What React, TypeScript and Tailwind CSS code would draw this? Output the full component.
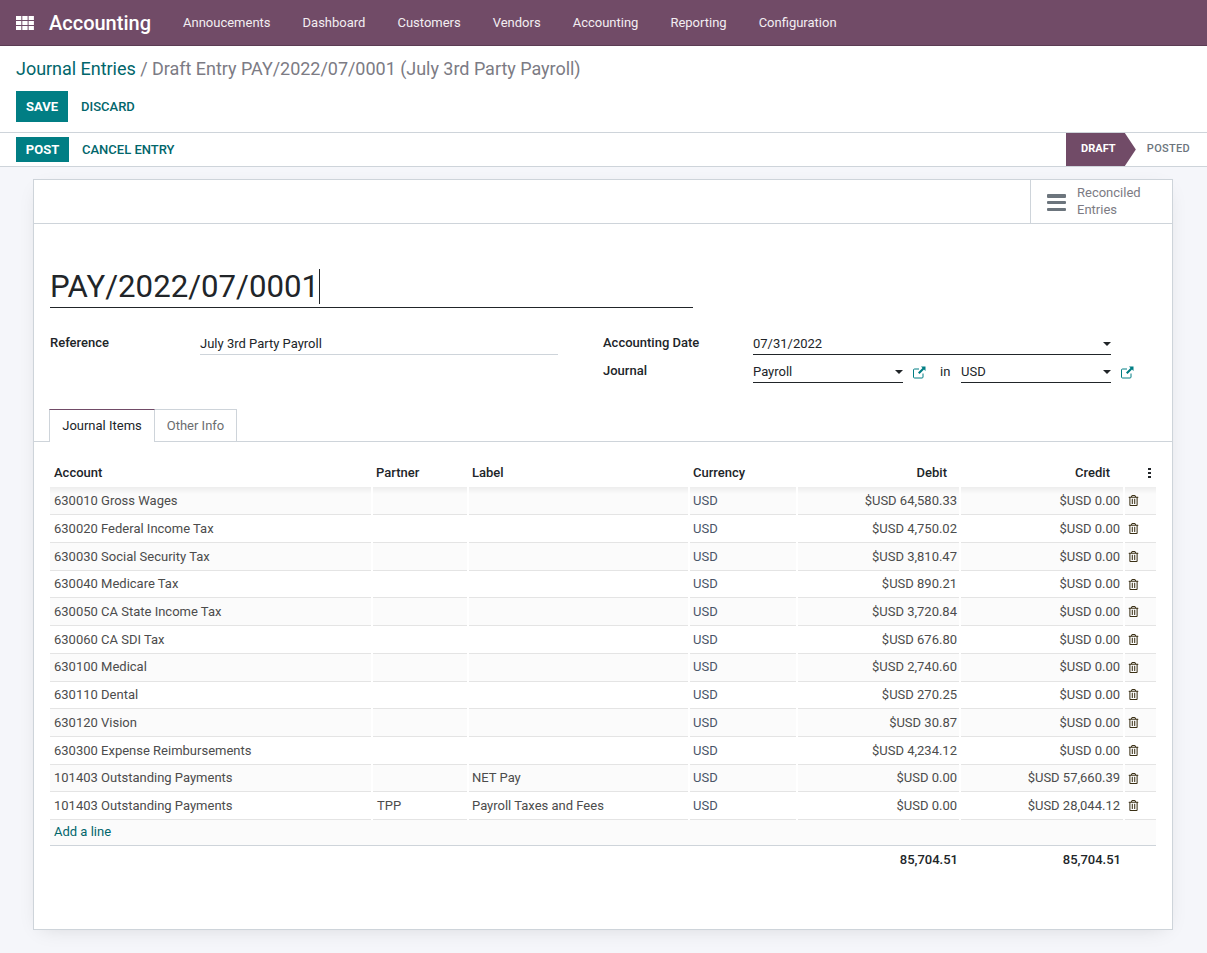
import { FaRegTrashAlt } from 'react-icons/fa';

const menus = ['Annoucements', 'Dashboard', 'Customers', 'Vendors', 'Accounting', 'Reporting', 'Configuration'];

type Line = { account: string; partner?: string; label?: string; debit: string; credit: string };

const lines: Line[] = [
  { account: '630010 Gross Wages', debit: '$USD 64,580.33', credit: '$USD 0.00' },
  { account: '630020 Federal Income Tax', debit: '$USD 4,750.02', credit: '$USD 0.00' },
  { account: '630030 Social Security Tax', debit: '$USD 3,810.47', credit: '$USD 0.00' },
  { account: '630040 Medicare Tax', debit: '$USD 890.21', credit: '$USD 0.00' },
  { account: '630050 CA State Income Tax', debit: '$USD 3,720.84', credit: '$USD 0.00' },
  { account: '630060 CA SDI Tax', debit: '$USD 676.80', credit: '$USD 0.00' },
  { account: '630100 Medical', debit: '$USD 2,740.60', credit: '$USD 0.00' },
  { account: '630110 Dental', debit: '$USD 270.25', credit: '$USD 0.00' },
  { account: '630120 Vision', debit: '$USD 30.87', credit: '$USD 0.00' },
  { account: '630300 Expense Reimbursements', debit: '$USD 4,234.12', credit: '$USD 0.00' },
  { account: '101403 Outstanding Payments', label: 'NET Pay', debit: '$USD 0.00', credit: '$USD 57,660.39' },
  { account: '101403 Outstanding Payments', partner: 'TPP', label: 'Payroll Taxes and Fees', debit: '$USD 0.00', credit: '$USD 28,044.12' },
];

function Caret() {
  return <span className="mt-[1px] h-0 w-0 border-x-[4px] border-t-[4px] border-x-transparent border-t-[#212529]" />;
}

function ExternalLink() {
  return (
    <svg width="13" height="13" viewBox="0 0 13 13" fill="none" className="text-[#017e84]">
      <path d="M10 7.5v3.5a1 1 0 0 1-1 1H1.5a1 1 0 0 1-1-1V4a1 1 0 0 1 1-1H6" stroke="currentColor" strokeWidth="1" />
      <path d="M8 0.5H12.5V5L11 3.5 6.5 8 5 6.5 9.5 2Z" fill="currentColor" />
    </svg>
  );
}

function SelectField({ value, width }: { value: string; width: string }) {
  return (
    <div className={`flex h-[22px] items-center justify-between border-b border-[#212529] text-[#212529] ${width}`}>
      <span>{value}</span>
      <Caret />
    </div>
  );
}

export default function App() {
  return (
    <div className="flex h-[953px] w-[1207px] flex-col overflow-hidden bg-[#f5f6fa] text-[13px] text-[#4c4c4c] [font-family:Roboto,sans-serif]">
      <nav className="flex h-[46px] shrink-0 items-center border-b border-[#5b3c53] bg-[#714b67] text-white">
        <svg width="18" height="14" viewBox="0 0 18 14" fill="currentColor" className="ml-[16px]">
          <rect x="0" y="0" width="5.3" height="4" />
          <rect x="6.3" y="0" width="5.3" height="4" />
          <rect x="12.6" y="0" width="5.3" height="4" />
          <rect x="0" y="5" width="5.3" height="4" />
          <rect x="6.3" y="5" width="5.3" height="4" />
          <rect x="12.6" y="5" width="5.3" height="4" />
          <rect x="0" y="10" width="5.3" height="4" />
          <rect x="6.3" y="10" width="5.3" height="4" />
          <rect x="12.6" y="10" width="5.3" height="4" />
        </svg>
        <span className="ml-[15px] text-[20px] font-medium">Accounting</span>
        <div className="ml-[32px] flex gap-[32px] text-[13px] text-[#f3eef2]">
          {menus.map((menu) => (
            <span key={menu}>{menu}</span>
          ))}
        </div>
      </nav>

      <div className="h-[86px] shrink-0 bg-white px-[16px]">
        <div className="pt-[11px] text-[18px] leading-[24px] tracking-[-0.03px] text-[#7c7b84]">
          <span className="text-[#01666b]">Journal Entries</span> / Draft Entry PAY/2022/07/0001 (July 3rd Party Payroll)
        </div>
        <div className="mt-[10px] flex items-center">
          <button className="h-[31px] w-[52px] bg-[#017e84] text-[13px] font-bold text-white">SAVE</button>
          <button className="ml-[13px] text-[13px] font-medium text-[#01666b]">DISCARD</button>
        </div>
      </div>

      <div className="flex h-[35px] shrink-0 items-center justify-between border-y border-[#ced4da] bg-white pl-[16px]">
        <div className="flex items-center">
          <button className="h-[25px] w-[53px] bg-[#017e84] text-[13px] font-bold text-white">POST</button>
          <button className="ml-[13px] text-[13px] font-medium text-[#01666b]">CANCEL ENTRY</button>
        </div>
        <div className="flex h-full items-stretch text-[11px] font-medium">
          <span className="flex w-[59px] items-center justify-center bg-[#714b67] pl-[6px] font-bold text-white">DRAFT</span>
          <span className="h-full w-[11px] bg-[#714b67] [clip-path:polygon(0_0,100%_50%,0_100%)]" />
          <span className="flex items-center pl-[11px] pr-[17px] tracking-[0.3px] text-[#6c757d]">POSTED</span>
        </div>
      </div>

      <main className="ml-[33px] mr-[34px] mt-[12px] h-[751px] border border-[#ced4da] bg-white shadow-[0_5px_20px_-8px_rgba(0,0,0,0.15)]">
        <div className="flex h-[44px] justify-end border-b border-[#ced4da]">
          <div className="flex w-[142px] items-center border-l border-[#ced4da] pl-[16px] text-[#7c7b84]">
            <div className="mt-[2px] flex h-[17px] w-[19px] flex-col justify-between">
              <span className="h-[3.5px] rounded-[1px] bg-[#6c757d]" />
              <span className="h-[3.5px] rounded-[1px] bg-[#6c757d]" />
              <span className="h-[3.5px] rounded-[1px] bg-[#6c757d]" />
            </div>
            <div className="-mt-[2px] ml-[11px] leading-[17px]">
              Reconciled
              <br />
              Entries
            </div>
          </div>
        </div>

        <div className="ml-[16px] mt-[40px] flex h-[44px] w-[643px] items-center border-b border-[#212529] pt-[3px] text-[31.2px] text-[#212529]">
          PAY/2022/07/0001
          <span className="-mt-[1px] h-[35px] w-px bg-[#212529]" />
        </div>

        <div className="mt-[21px] flex pl-[16px]">
          <div className="flex w-[553px]">
            <span className="w-[150px] pt-[4px] font-medium text-[#212529]">Reference</span>
            <div className="flex h-[26px] w-[358px] items-end border-b border-[#ced4da] pb-[1px] text-[#212529]">
              July 3rd Party Payroll
            </div>
          </div>
          <div className="w-[540px]">
            <div className="flex items-start">
              <span className="w-[150px] pt-[4px] font-medium text-[#212529]">Accounting Date</span>
              <div className="mt-[4px]">
                <SelectField value="07/31/2022" width="w-[358px]" />
              </div>
            </div>
            <div className="mt-[6px] flex items-start">
              <span className="w-[150px] font-medium text-[#212529]">Journal</span>
              <div className="flex items-center">
                <SelectField value="Payroll" width="w-[150px]" />
                <span className="ml-[10px]">
                  <ExternalLink />
                </span>
                <span className="ml-[14px] w-[21px] text-[#212529]">in</span>
                <SelectField value="USD" width="w-[150px]" />
                <span className="ml-[10px]">
                  <ExternalLink />
                </span>
              </div>
            </div>
          </div>
        </div>

        <div className="mt-[26px] flex h-[33px] border-b border-[#ced4da] pl-[15px]">
          <div className="flex h-[33px] w-[106px] items-center justify-center border-x border-t border-[#ced4da] border-t-[#714b67] bg-white pb-[1px] text-[#212529]">
            Journal Items
          </div>
          <div className="flex h-[32px] w-[82px] items-center justify-center border-r border-t border-[#ced4da] text-[#6b6d70]">
            Other Info
          </div>
        </div>

        <table className="ml-[16px] mt-[17px] w-[1106px] table-fixed border-collapse">
          <colgroup>
            <col className="w-[322px]" />
            <col className="w-[96px]" />
            <col className="w-[221px]" />
            <col className="w-[108px]" />
            <col className="w-[163px]" />
            <col className="w-[164px]" />
            <col className="w-[32px]" />
          </colgroup>
          <thead>
            <tr className="h-[28px] font-medium text-[#212529]">
              <th className="px-[4px] text-left font-medium">Account</th>
              <th className="px-[4px] text-left font-medium">Partner</th>
              <th className="px-[4px] text-left font-medium">Label</th>
              <th className="px-[4px] text-left font-medium">Currency</th>
              <th className="pr-[13px] text-right font-medium">Debit</th>
              <th className="pr-[14px] text-right font-medium">Credit</th>
              <th className="text-right">
                <span className="-mt-[2px] inline-flex flex-col gap-[1.5px] pr-[5px] align-middle">
                  <span className="h-[2.5px] w-[3px] bg-[#212529]" />
                  <span className="h-[2.5px] w-[3px] bg-[#212529]" />
                  <span className="h-[2.5px] w-[3px] bg-[#212529]" />
                </span>
              </th>
            </tr>
          </thead>
          <tbody>
            {lines.map((line, i) => (
              <tr
                key={i}
                className={`h-[27.73px] border-b border-[#e4e4e4] last:border-b-0 ${i === 0 ? 'bg-[linear-gradient(#ededed,#fbfbfb_7px)]' : i % 2 === 0 ? 'bg-[#fbfbfb]' : 'bg-white'}`}
              >
                <td className="px-[4px]">{line.account}</td>
                <td className="border-l-2 border-white px-[4px]">{line.partner}</td>
                <td className="border-l-2 border-white px-[3px]">{line.label}</td>
                <td className="border-l-2 border-white px-[3px] text-[#4a5568]">USD</td>
                <td className="border-l-2 border-white pr-[2px] text-right">{line.debit}</td>
                <td className="border-l-2 border-white pr-[3px] text-right">{line.credit}</td>
                <td className="border-l-2 border-white pl-[3px]">
                  <FaRegTrashAlt className="text-[11px] text-[#3a2f14]" />
                </td>
              </tr>
            ))}
            <tr className="h-[26px] border-b border-[#ced4da] bg-[#fbfbfb]">
              <td colSpan={7} className="px-[4px] pb-[2px] text-[#01666b]">
                Add a line
              </td>
            </tr>
          </tbody>
          <tfoot>
            <tr className="h-[28px] font-medium text-[#212529]">
              <td colSpan={4} />
              <td className="pr-[2px] text-right">85,704.51</td>
              <td className="pr-[3px] text-right">85,704.51</td>
              <td />
            </tr>
          </tfoot>
        </table>
      </main>
    </div>
  );
}
